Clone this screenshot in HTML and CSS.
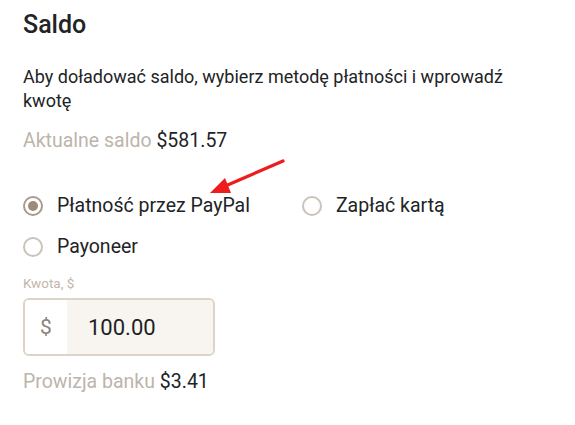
FILE: index.html
```html
<!DOCTYPE html>
<html lang="pl">
<head>
<meta charset="utf-8">
<link rel="stylesheet" href="styles.css">
</head>
<body>
<div class="panel">
  <h1 class="title">Saldo</h1>
  <p class="intro">Aby doładować saldo, wybierz metodę płatności i wprowadź kwotę</p>
  <p class="line"><span class="muted">Aktualne saldo</span> <span class="value">$581.57</span></p>
  <div class="methods">
    <label class="radio"><span class="dot checked"></span><span>Płatność przez PayPal</span></label>
    <label class="radio"><span class="dot"></span><span>Zapłać kartą</span></label>
    <label class="radio"><span class="dot"></span><span>Payoneer</span></label>
  </div>
  <div class="field-label">Kwota, $</div>
  <div class="amount">
    <div class="prefix">$</div>
    <div class="amount-value">100.00</div>
  </div>
  <p class="line fee"><span class="muted">Prowizja banku</span> <span class="value">$3.41</span></p>
  <svg class="arrow" width="100" height="50" viewBox="0 0 100 50">
    <line x1="85" y1="11" x2="25" y2="37" stroke="#ee1c1c" stroke-width="3.2" stroke-linecap="round"/>
    <polygon points="12,43 27,28 33,43" fill="#ee1c1c"/>
  </svg>
</div>
</body>
</html>
```
FILE: styles.css
```css
html, body {
  margin: 0;
  padding: 0;
  background: #ffffff;
}
body {
  font-family: Roboto, "Liberation Sans", sans-serif;
  color: #222326;
}
.panel {
  position: relative;
  padding: 10px 0 0 23px;
  width: 505px;
}
.title {
  margin: 0;
  font-size: 25px;
  line-height: 30px;
  font-weight: 500;
}
.intro {
  margin: 25px 0 0;
  font-size: 18px;
  line-height: 24px;
}
.line {
  margin: 16px 0 0;
  font-size: 19.5px;
  line-height: 24px;
}
.muted {
  color: #bdb4ac;
}
.value {
  color: #222326;
}
.methods {
  margin-top: 41px;
  display: flex;
  flex-wrap: wrap;
  width: 480px;
  row-gap: 17px;
}
.radio {
  display: flex;
  align-items: center;
  gap: 14px;
  font-size: 19.5px;
  line-height: 24px;
  margin-right: 52px;
}
.radio .dot {
  box-sizing: border-box;
  width: 20px;
  height: 20px;
  border-radius: 50%;
  border: 2px solid #cbc3ba;
  display: flex;
  align-items: center;
  justify-content: center;
}
.radio .dot.checked {
  border-color: #a89b8d;
}
.radio .dot.checked::after {
  content: "";
  width: 10px;
  height: 10px;
  border-radius: 50%;
  background: #9c8b76;
}
.field-label {
  margin-top: 16px;
  font-size: 13.5px;
  line-height: 16px;
  color: #c4b6a8;
}
.amount {
  margin-top: 7px;
  box-sizing: border-box;
  width: 192px;
  height: 58px;
  border: 2px solid #ddd3c8;
  border-radius: 6px;
  display: flex;
  overflow: hidden;
}
.prefix {
  width: 42px;
  display: flex;
  align-items: center;
  justify-content: center;
  background: #ffffff;
  color: #8d8379;
  font-size: 21px;
}
.amount-value {
  flex: 1;
  background: #f8f5f0;
  display: flex;
  align-items: center;
  padding-left: 21px;
  font-size: 22px;
  color: #1e1f24;
}
.fee {
  margin-top: 14px;
}
.arrow {
  position: absolute;
  left: 198px;
  top: 150px;
}
```
